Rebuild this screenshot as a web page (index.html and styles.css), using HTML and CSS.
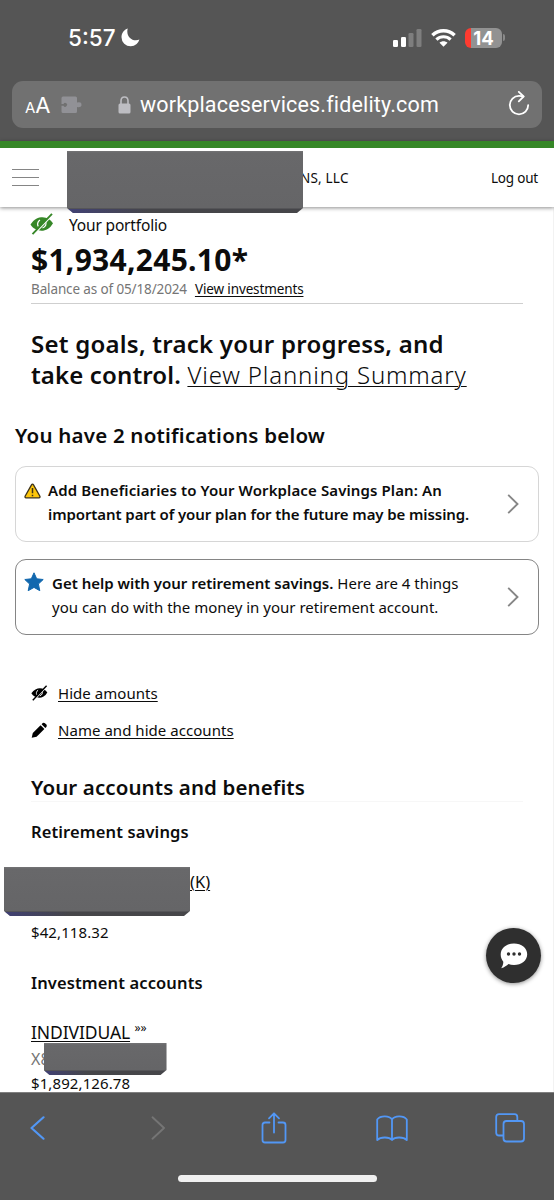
FILE: index.html
```html
<!DOCTYPE html>
<html lang="en">

<head>
    <meta charset="utf-8">
    <meta name="viewport" content="width=device-width, initial-scale=1">
    <link rel="stylesheet" href="styles.css">
    <title>Your portfolio</title>
</head>

<body>
    <!-- browser chrome -->
    <div class="chrome">
        <div class="status">
            <span class="time">5:57</span>
            <svg class="moon" width="19" height="19" viewBox="0 0 19 19">
                <path d="M6.800 .6A8.700 8.700 0 0 0 6.300 3.200C6.300 8.500 10 12.300 15 12.300C16.300 12.300 17.500 12 18.400 11.600A9.300 9.300 0 0 1 9.700 18.300A9.200 9.200 0 0 1 .5 9.200C.5 5.200 3 1.900 6.800 .6Z" fill="#fff"/>
            </svg>
            <svg class="signal" width="29" height="18" viewBox="0 0 29 18">
                <rect x="0" y="11" width="5" height="7" rx="1.300" fill="#fff"/>
                <rect x="8" y="8" width="5" height="10" rx="1.300" fill="#fff"/>
                <rect x="15.500" y="4" width="5" height="14" rx="1.300" fill="#7e7e7e"/>
                <rect x="23.500" y="0" width="5" height="18" rx="1.300" fill="#7e7e7e"/>
            </svg>
            <svg class="wifi" width="25" height="18" viewBox="0 0 25 18">
                <path d="M1.400 6.300C7.700 .2 17.300 .2 23.600 6.300" fill="none" stroke="#fff" stroke-width="3.400"/>
                <path d="M5.400 10.600C9.500 6.800 15.500 6.800 19.600 10.600" fill="none" stroke="#fff" stroke-width="3.200"/>
                <path d="M8.500 13.700C10.800 11.700 14.200 11.700 16.500 13.700L12.500 17.700Z" fill="#fff"/>
            </svg>
            <span class="battery">14</span>
            <span class="battery-cap"></span>
        </div>
        <div class="address-bar">
            <span class="aa"><small>A</small>A</span>
            <svg class="puzzle" width="21" height="18" viewBox="0 0 21 18">
                <path d="M2 .5H14.500Q16 .5 16 2V6.500Q18 5.800 19.500 6.500Q20.800 7.500 20.500 9.500Q19.800 11.800 16 11V15.500Q16 17 14.500 17H2Q.5 17 .5 15.500V9.700H2.500A1.900 1.900 0 1 0 2.500 7.900H.5V2Q.5 .5 2 .5Z" fill="#919196"/>
            </svg>
            <svg class="lock" width="13" height="18" viewBox="0 0 13 18">
                <rect x=".5" y="7.500" width="12" height="10" rx="1.500" fill="#bdbdc2"/>
                <path d="M3 8V5Q3 1 6.500 1T10 5V8" fill="none" stroke="#bdbdc2" stroke-width="1.600"/>
            </svg>
            <span class="url">workplaceservices.fidelity.com</span>
            <svg class="reload" width="22" height="25" viewBox="0 0 22 25" fill="none" stroke="#fff" stroke-width="1.800" stroke-linecap="round" stroke-linejoin="round">
                <path d="M15.500 5.500C14 5 12.500 4.900 11 4.900A9.200 9.200 0 1 0 20.200 14.100"/>
                <path d="M10.800 .9L15.600 5.500L10.800 10.300"/>
            </svg>
        </div>
    </div>

    <!-- site header -->
    <header class="site-header">
        <button class="menu" aria-label="Menu"><i></i><i></i><i></i></button>
        <span class="redacted redacted-company"></span>
        <span class="company">NS, LLC</span>
        <a class="logout">Log out</a>
    </header>

    <main>
        <section class="portfolio">
            <div class="portfolio-title">
                <svg width="24" height="22" viewBox="0 0 24 22">
                    <path d="M.5 11.500C4 6 8.500 4.200 12.500 4.200C17 4.200 20.500 6.500 23 10.200C20 15.500 15.800 17.700 11.500 17.700C7 17.700 3 15.500 .5 11.500Z" fill="#368727"/>
                    <path d="M10 7C7.500 8.500 7 11.500 8.300 13.500M15.500 8.500C17 11 15.500 14 12.500 15" stroke="#fff" stroke-width="1.300" fill="none"/>
                    <path d="M4.300 21L22.500 2" stroke="#fff" stroke-width="1.600"/>
                    <path d="M2.500 21.200L22 .8" stroke="#368727" stroke-width="1.900"/>
                </svg>
                <span>Your portfolio</span>
            </div>
            <div class="total">$1,934,245.10*</div>
            <div class="balance">
                <span class="as-of">Balance as of 05/18/2024</span>
                <a class="view-investments">View investments</a>
            </div>
        </section>

        <h2 class="goals">Set goals, track your progress, and<br><span class="control">take control.</span> <a>View Planning Summary</a></h2>

        <section class="notifications">
            <h3>You have 2 notifications below</h3>
            <div class="card card-warning">
                <svg class="warning-icon" width="17" height="16" viewBox="0 0 17 16">
                    <path d="M8.500 1.200Q9.100 1.200 9.500 1.900L15.900 13.300Q16.300 14.700 15 14.800H2Q.7 14.700 1.100 13.300L7.500 1.900Q7.900 1.200 8.500 1.200Z" fill="#fdc60a" stroke="#3d3219" stroke-width="1.300"/>
                    <path d="M8.500 5V10.200M8.500 11.700V13.200" stroke="#3d3219" stroke-width="1.500"/>
                </svg>
                <p><b><span class="line-one">Add Beneficiaries to Your Workplace Savings Plan: An</span><br><span class="line-two">important part of your plan for the future may be missing.</span></b></p>
                <svg class="chevron" width="12" height="20" viewBox="0 0 12 20"><path d="M1.200 .9L10.500 10L1.200 19.100" fill="none" stroke="#868686" stroke-width="1.900"/></svg>
            </div>
            <div class="card card-help">
                <svg class="star-icon" width="20" height="20" viewBox="0 0 20 20">
                    <path d="M10 .8L12.700 6.800L19.200 7.500L14.400 12L15.800 18.700L10 15.400L4.200 18.700L5.600 12L.8 7.500L7.300 6.800Z" fill="#1268ae" stroke="#1268ae" stroke-linejoin="round"/>
                </svg>
                <p><b>Get help with your retirement savings.</b> Here are 4 things<br>you can do with the money in your retirement account.</p>
                <svg class="chevron" width="12" height="20" viewBox="0 0 12 20"><path d="M1.200 .9L10.500 10L1.200 19.100" fill="none" stroke="#868686" stroke-width="1.900"/></svg>
            </div>
        </section>

        <section class="actions">
            <div class="action">
                <svg width="17" height="16" viewBox="0 0 24 22">
                    <path d="M.5 11.500C4 6 8.500 4.200 12.500 4.200C17 4.200 20.500 6.500 23 10.200C20 15.500 15.800 17.700 11.500 17.700C7 17.700 3 15.500 .5 11.500Z" fill="#000"/>
                    <path d="M10 7C7.500 8.500 7 11.500 8.300 13.500M15.500 8.500C17 11 15.500 14 12.500 15" stroke="#fff" stroke-width="1.300" fill="none"/>
                    <path d="M4.300 21L22.500 2" stroke="#fff" stroke-width="1.600"/>
                    <path d="M2.500 21.200L22 .8" stroke="#000" stroke-width="2"/>
                </svg>
                <a>Hide amounts</a>
            </div>
            <div class="action">
                <svg width="17" height="17" viewBox="0 0 17 17">
                    <path d="M.7 15.800L1.800 11L9.600 3.200L13.400 7L5.600 14.700Z"/>
                    <path d="M10.600 2.200L11.700 1.100Q12.800 .2 14 1.200L15.300 2.500Q16.400 3.700 15.400 4.900L14.300 6Z"/>
                </svg>
                <a>Name and hide accounts</a>
            </div>
        </section>

        <section class="accounts">
            <h3>Your accounts and benefits</h3>

            <h4>Retirement savings</h4>
            <div class="plan">
                <span class="redacted redacted-plan"></span>
                <a>(K)</a>
            </div>
            <div class="amount plan-amount">$42,118.32</div>

            <h4 class="investment">Investment accounts</h4>
            <div class="individual"><a>INDIVIDUAL</a> <sup>»»</sup></div>
            <div class="account-number">X8<span class="redacted redacted-number"></span></div>
            <div class="amount">$1,892,126.78</div>
        </section>

        <button class="chat" aria-label="Chat">
            <svg width="28" height="26" viewBox="0 0 28 26">
                <path d="M14 .5C21.500 .5 27.200 5 27.200 11.200C27.200 17.500 21.500 22 14 22C11.800 22 10 21.700 8.500 21.100C6.700 22.600 4.500 24.500 1.200 25.300C2.600 23.300 3.400 21 3.300 18.700C1.600 16.700 .7 14.200 .7 11.500C.7 5 6.500 .5 14 .5Z" fill="#fff"/>
                <g fill="#2f2f2f"><circle cx="8.500" cy="11" r="1.700"/><circle cx="14" cy="11" r="1.700"/><circle cx="19.500" cy="11" r="1.700"/></g>
            </svg>
        </button>
    </main>

    <!-- bottom toolbar -->
    <footer class="toolbar">
        <nav>
            <svg class="back" width="15" height="24" viewBox="0 0 15 24"><path d="M13.500 1.300L1.500 12L13.500 22.700" fill="none" stroke="#5297f5" stroke-width="2.200" stroke-linecap="round" stroke-linejoin="round"/></svg>
            <svg class="forward" width="15" height="24" viewBox="0 0 15 24"><path d="M1.500 1.300L13 12L1.500 22.700" fill="none" stroke="#757575" stroke-width="1.900" stroke-linecap="round" stroke-linejoin="round"/></svg>
            <svg class="share" width="26" height="32" viewBox="0 0 26 32" fill="none" stroke="#5297f5" stroke-width="1.800" stroke-linecap="round" stroke-linejoin="round">
                <path d="M8.500 10.500H4Q1.500 10.500 1.500 13V28Q1.500 30.500 4 30.500H22Q24.500 30.500 24.500 28V13Q24.500 10.500 22 10.500H17.500"/>
                <path d="M13 20.500V1.500M8 6.300L13 1.300L18 6.300"/>
            </svg>
            <svg class="bookmarks" width="32" height="27" viewBox="0 0 32 27" fill="none" stroke="#5297f5" stroke-width="1.800" stroke-linejoin="round">
                <path d="M16 4.500C13.500 .5 4.500 .2 1.200 4.500V25C4.500 21.800 13 21.500 16 25C19 21.500 27.500 21.800 30.800 25V4.500C27.500 .2 18.500 .5 16 4.500V25"/>
            </svg>
            <svg class="tabs" width="30" height="30" viewBox="0 0 30 30" fill="none" stroke="#5297f5" stroke-width="1.800">
                <path d="M8.500 22.500H4Q1.200 22.500 1.200 19.700V4Q1.200 1.200 4 1.200H19.500Q22.300 1.200 22.300 4V8"/>
                <rect x="8.500" y="8" width="20.500" height="20.500" rx="3"/>
            </svg>
        </nav>
        <div class="home-indicator"></div>
    </footer>
</body>

</html>
```
FILE: styles.css
```css
* {
    box-sizing: border-box;
}

body {
    font-family: "Noto Sans", "Open Sans", sans-serif;
    margin: 0;
    width: 554px;
    height: 1200px;
    display: flex;
    flex-direction: column;
    overflow: hidden;
    background-color: #fff;
    color: #0c0c0c;
    white-space: nowrap;
}

svg {
    display: block;
    flex: none;
}

h2,
h3,
h4,
p {
    margin: 0;
}

button {
    border: none;
    padding: 0;
    background: none;
}

a {
    color: inherit;
    text-decoration: underline;
    text-decoration-thickness: 1px;
    text-underline-offset: 2px;
}

b {
    font-weight: 600;
}

/* browser chrome */
.chrome {
    flex: none;
    height: 141px;
    padding: 0 12px;
    background-color: #555;
    color: #fff;
    font-family: Inter, "Liberation Sans", sans-serif;
}

.status {
    display: flex;
    align-items: center;
    height: 81px;
    padding: 0 37px 6px 56px;
}

.time {
    font-size: 22.5px;
    font-weight: 500;
}

.moon {
    margin-left: 5px;
}

.signal {
    margin-left: auto;
}

.wifi {
    margin-left: 9px;
}

.battery {
    width: 37px;
    height: 20px;
    margin-left: 9px;
    border-radius: 6px;
    background: linear-gradient(to right, #fe3b30 6px, #929292 6px);
    font-size: 18.5px;
    font-weight: 700;
    line-height: 20px;
    text-align: center;
}

.battery-cap {
    width: 2px;
    height: 7px;
    margin-left: 1px;
    border-radius: 0 3px 3px 0;
    background-color: #8a8a8a;
}

.address-bar {
    display: flex;
    align-items: center;
    height: 47px;
    padding: 0 12px 0 13px;
    border-radius: 11px;
    background-color: #717171;
}

.aa {
    width: 25px;
    font-size: 22px;
}

.aa small {
    font-size: 15px;
}

.puzzle {
    margin-left: 11px;
}

.lock {
    margin-left: 36px;
}

.url {
    margin-left: 9px;
    font-family: Roboto, "Liberation Sans", sans-serif;
    font-size: 21.5px;
    letter-spacing: 0.16px;
}

.reload {
    margin: -2px 0 0 auto;
}

/* site header */
.site-header {
    position: relative;
    z-index: 1;
    flex: none;
    display: flex;
    align-items: center;
    height: 66px;
    padding: 0 16px 0 12px;
    border-top: 7px solid #368727;
    background-color: #fff;
    box-shadow: 0 1px 4px rgba(0, 0, 0, 0.45);
    font-size: 13.5px;
}

.menu {
    display: flex;
    flex-direction: column;
    gap: 7px;
    width: 27px;
    margin-top: -1px;
}

.menu i {
    height: 1px;
    background-color: #858585;
}

.redacted {
    background: linear-gradient(to right, rgba(60, 60, 160, 0.5), rgba(60, 60, 90, 0) 35%) bottom / 100% 4px no-repeat,
        linear-gradient(#747476 0, #68686a 2px, #656567 calc(100% - 5px), #454549 calc(100% - 4px), #464649 100%);
    clip-path: polygon(0 0, 100% 0, 100% calc(100% - 5px), calc(100% - 6px) 100%, 6px 100%, 0 calc(100% - 5px));
}

.redacted-company {
    z-index: 1;
    align-self: flex-start;
    width: 236px;
    height: 62px;
    margin: 3px 0 -6px 28px;
}

.company {
    margin: 0 auto 0 -3px;
    letter-spacing: 0.2px;
}

.logout {
    text-decoration: none;
    letter-spacing: -0.2px;
}

main {
    position: relative;
    height: 885px;
    overflow: hidden;
    padding: 8px 15px 0;
    border-right: 1px solid #f2f2f2;
}

.portfolio {
    margin: 0 15px 0 16px;
    padding-bottom: 4px;
    border-bottom: 1px solid #cfcfcf;
}

.portfolio-title {
    display: flex;
    align-items: center;
    gap: 15px;
    height: 20px;
    font-size: 15.5px;
    letter-spacing: -0.17px;
}

.portfolio-title svg {
    margin: -2px 0 0 -1px;
}

.total {
    margin-top: 7px;
    font-size: 30px;
    font-weight: 700;
    line-height: 36px;
    letter-spacing: 0.27px;
}

.balance {
    display: flex;
    gap: 8px;
    margin-top: 1px;
    font-size: 13.5px;
    line-height: 20px;
    letter-spacing: -0.13px;
}

.as-of {
    color: #757575;
}

.goals {
    margin: 24px 0 0 16px;
    font-size: 24px;
    font-weight: 600;
    line-height: 31px;
    letter-spacing: 0.24px;
}

.goals a {
    font-weight: 350;
    letter-spacing: 0.83px;
}

.goals .control {
    letter-spacing: 0.13px;
}

/* notifications */
.notifications h3 {
    margin-top: 31px;
    font-size: 20.5px;
    font-weight: 600;
    line-height: 28px;
    letter-spacing: 0.21px;
}

.card {
    display: flex;
    height: 76px;
    margin-right: -1px;
    padding: 12px 19px 0 8px;
    border: 1px solid #d6d6d6;
    border-radius: 11px;
    font-size: 15px;
    line-height: 23.5px;
}

.card-warning {
    margin-top: 17px;
}

.card-help {
    margin-top: 17px;
    border-color: #858585;
}

.warning-icon {
    margin: 4px 7px 0 0;
}

.star-icon {
    margin-right: 8px;
}

.card .line-one {
    letter-spacing: 0.11px;
}

.card .line-two {
    letter-spacing: -0.09px;
}

.chevron {
    margin: 15px 0 0 auto;
}

/* hide and rename links */
.actions {
    margin: 48px 0 0 16px;
}

.action {
    display: flex;
    align-items: center;
    gap: 10px;
    height: 20px;
    font-size: 15px;
    letter-spacing: 0.04px;
}

.action + .action {
    margin-top: 17px;
}

/* accounts */
.accounts {
    margin: 33px 15px 0 16px;
}

.accounts h3 {
    border-bottom: 1px solid #f7f7f7;
    font-size: 20.5px;
    font-weight: 600;
    line-height: 28px;
    letter-spacing: 0.1px;
}

.accounts h4 {
    margin-top: 18px;
    font-size: 16.5px;
    font-weight: 600;
    line-height: 24px;
    letter-spacing: 0.12px;
}

.plan {
    display: flex;
    height: 49px;
    margin: 23px 0 0 -27px;
    font-size: 16.5px;
}

.plan a {
    margin-top: 3px;
    line-height: 24px;
}

.redacted-plan {
    width: 186px;
    height: 49px;
}

.amount {
    margin-top: 2px;
    font-size: 15px;
    line-height: 20px;
    letter-spacing: 0.1px;
}

.plan-amount {
    margin-top: 6px;
}

.accounts .investment {
    margin-top: 29px;
}

.individual {
    height: 24px;
    margin-top: 25px;
    font-size: 17.5px;
    line-height: 24px;
    letter-spacing: -0.11px;
}

.individual sup {
    font-size: 12px;
    line-height: 0;
}

.account-number {
    display: flex;
    margin-top: 3px;
    color: #757575;
    font-size: 16px;
    line-height: 24px;
}

.redacted-number {
    width: 123px;
    height: 32px;
    margin: -4px 0 -4px -6px;
}

.chat {
    position: absolute;
    top: 721px;
    right: 12px;
    display: flex;
    align-items: center;
    justify-content: center;
    width: 55px;
    height: 55px;
    border-radius: 50%;
    background-color: #2f2f2f;
    box-shadow: 0 1px 4px rgba(0, 0, 0, 0.45);
}

/* bottom toolbar */
.toolbar {
    flex: none;
    display: flex;
    flex-direction: column;
    align-items: center;
    height: 108px;
    background-color: #555;
    border-top: 1px solid #808080;
}

.toolbar nav {
    display: flex;
    align-items: center;
    width: 100%;
    height: 70px;
    padding-left: 30px;
}

.forward {
    margin-left: 106px;
}

.share {
    margin-left: 95px;
}

.bookmarks {
    margin-left: 89px;
}

.tabs {
    margin-left: 87px;
}

.home-indicator {
    width: 199px;
    height: 7px;
    margin-top: 12px;
    border-radius: 4px;
    background-color: #f0f0f0;
}
```
